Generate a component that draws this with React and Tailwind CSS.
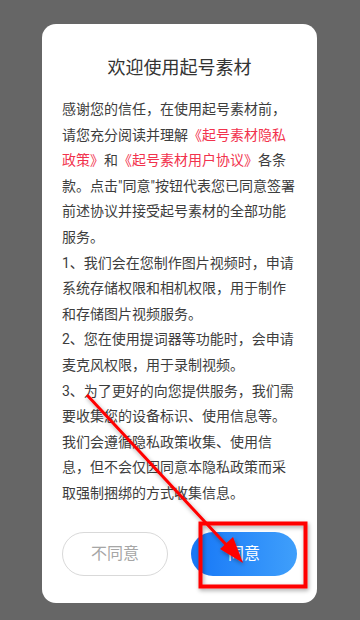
import React from 'react'

// 隐私协议弹窗 + 红色标注
function Annotation() {
  return (
    <svg className="pointer-events-none absolute inset-0" width="360" height="620" viewBox="0 0 360 620">
      <defs>
        <filter id="sh" x="-20%" y="-20%" width="140%" height="140%">
          <feDropShadow dx="1" dy="2" stdDeviation="2" floodColor="#000" floodOpacity="0.35" />
        </filter>
      </defs>
      <g filter="url(#sh)">
        <rect x="200.5" y="523.5" width="105" height="63" fill="none" stroke="#ff0000" strokeWidth="4" />
        <line x1="87" y1="395" x2="232" y2="551" stroke="#ff0000" strokeWidth="3" />
        <polygon points="243,563 220,549 233,537" fill="#ff0000" />
      </g>
    </svg>
  )
}

export default function App() {
  const red = 'text-[#f2324d]'
  return (
    <div
      className="relative w-[360px] h-[620px] bg-[#666666] overflow-hidden"
      style={{ fontFamily: 'Roboto, "Noto Sans CJK SC", sans-serif' }}
    >
      <div className="absolute left-[42px] top-[24px] w-[275px] h-[579px] bg-white rounded-[14px] flex flex-col">
        <h2 className="pt-[30px] text-center text-[18px] leading-[28px] text-[#333333]">欢迎使用起号素材</h2>

        <div className="mt-[15px] pl-[20px] pr-[18px] text-[14px] leading-[25.6px] text-[#3d3d3d]">
          <p>
            感谢您的信任，在使用起号素材前，请您充分阅读并理解
            <span className={red}>《起号素材隐私政策》</span>和
            <span className={red}>《起号素材用户协议》</span>各条款。点击"同意"按钮代表您已同意签署前述协议并接受起号素材的全部功能服务。
          </p>
          <p>1、我们会在您制作图片视频时，申请系统存储权限和相机权限，用于制作和存储图片视频服务。</p>
          <p>2、您在使用提词器等功能时，会申请麦克风权限，用于录制视频。</p>
          <p>3、为了更好的向您提供服务，我们需要收集您的设备标识、使用信息等。我们会遵循隐私政策收集、使用信息，但不会仅因同意本隐私政策而采取强制捆绑的方式收集信息。</p>
        </div>

        <div className="mt-auto mb-[27px] px-[20px] flex justify-between">
          <button className="w-[106px] h-[44px] rounded-full border border-[#d9d9d9] text-[16px] text-[#a6a6a6] bg-white">
            不同意
          </button>
          <button className="w-[106px] h-[44px] rounded-full text-[16px] text-white bg-gradient-to-r from-[#1677f7] to-[#3f9ffb]">
            同意
          </button>
        </div>
      </div>
      <Annotation />
    </div>
  )
}
